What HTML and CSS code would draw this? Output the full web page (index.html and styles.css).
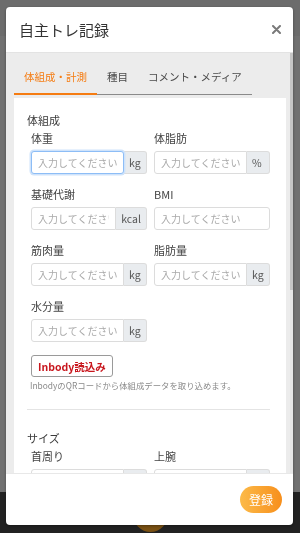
FILE: index.html
```html
<!DOCTYPE html>
<html lang="ja">
<head>
    <meta charset="UTF-8">
    <meta name="viewport" content="width=device-width, initial-scale=1.0">
    <title>自主トレ記録</title>
    <link rel="stylesheet" href="styles.css">
</head>
<body>
    <!-- page behind the dialog -->
    <div class="page">
        <div class="page-header"></div>
        <div class="page-main"></div>
        <div class="bottom-nav"><span class="nav-center"></span></div>
    </div>
    <div class="overlay"></div>

    <div class="modal">
        <div class="modal-header">
            <h1 class="modal-title">自主トレ記録</h1>
            <button class="close" type="button">
                <svg width="9" height="9" viewBox="0 0 9 9"><path d="M1 1L8 8M8 1L1 8" stroke="#7a7a7a" stroke-width="2" stroke-linecap="round"/></svg>
            </button>
        </div>

        <div class="modal-body">
            <div class="scroll-area">
                <div class="tabs">
                    <span class="tab active">体組成・計測</span>
                    <span class="tab">種目</span>
                    <span class="tab">コメント・メディア</span>
                </div>

                <div class="card">
                    <div class="section-title">体組成</div>
                    <div class="fields">
                        <div class="field">
                            <label>体重</label>
                            <div class="input-group"><input type="text" class="focus" placeholder="入力してください"><span class="addon">kg</span></div>
                        </div>
                        <div class="field">
                            <label>体脂肪</label>
                            <div class="input-group"><input type="text" placeholder="入力してください"><span class="addon">%</span></div>
                        </div>
                        <div class="field">
                            <label>基礎代謝</label>
                            <div class="input-group"><input type="text" placeholder="入力してください"><span class="addon">kcal</span></div>
                        </div>
                        <div class="field">
                            <label>BMI</label>
                            <div class="input-group"><input type="text" class="solo" placeholder="入力してください"></div>
                        </div>
                        <div class="field">
                            <label>筋肉量</label>
                            <div class="input-group"><input type="text" placeholder="入力してください"><span class="addon">kg</span></div>
                        </div>
                        <div class="field">
                            <label>脂肪量</label>
                            <div class="input-group"><input type="text" placeholder="入力してください"><span class="addon">kg</span></div>
                        </div>
                        <div class="field">
                            <label>水分量</label>
                            <div class="input-group"><input type="text" placeholder="入力してください"><span class="addon">kg</span></div>
                        </div>
                    </div>

                    <button class="inbody-btn" type="button">Inbody読込み</button>
                    <p class="help">InbodyのQRコードから体組成データを取り込めます。</p>

                    <hr class="divider">

                    <div class="section-title">サイズ</div>
                    <div class="fields">
                        <div class="field"><label>首周り</label><div class="input-group"><input type="text"><span class="addon"></span></div></div>
                        <div class="field"><label>上腕</label><div class="input-group"><input type="text"><span class="addon"></span></div></div>
                    </div>
                </div>
            </div>
            <div class="scrollbar"><div class="thumb"></div></div>
        </div>

        <div class="modal-footer">
            <button class="submit" type="button">登録</button>
        </div>
    </div>
</body>
</html>
```

FILE: styles.css
```css
html, body {
    margin: 0;
    height: 100%;
}

body {
    font-family: "Noto Sans CJK JP", "Noto Sans", sans-serif;
    color: #333;
    overflow: hidden;
}

/* page behind the dialog */
.page {
    height: 100%;
    display: flex;
    flex-direction: column;
    background: #e2e2e2;
}

.page-header {
    height: 36px;
    background: #d8d8d8;
}

.page-main {
    flex: 1;
}

.bottom-nav {
    height: 41px;
    background: #444;
    display: flex;
    justify-content: center;
}

.nav-center {
    width: 35px;
    height: 35px;
    margin-top: 5px;
    border-radius: 50%;
    background: #f3a126;
}

.overlay {
    position: fixed;
    inset: 0;
    background: rgba(0, 0, 0, 0.5);
}

/* dialog */
.modal {
    position: fixed;
    left: 6px;
    top: 7px;
    width: 287px;
    height: 518px;
    background: #fff;
    border-radius: 4px;
    box-shadow: 0 1px 3px rgba(0, 0, 0, 0.35);
    display: flex;
    flex-direction: column;
    overflow: hidden;
}

.modal-header {
    height: 45px;
    border-bottom: 1px solid #e3e3e3;
    display: flex;
    align-items: center;
    justify-content: space-between;
    padding: 0 11px 0 13px;
    flex-shrink: 0;
}

.modal-title {
    margin: 0;
    font-size: 15px;
    font-weight: 400;
    color: #333;
}

.close {
    border: none;
    background: none;
    padding: 0;
    width: 11px;
    height: 11px;
    display: flex;
    align-items: center;
    justify-content: center;
}

.modal-body {
    flex: 1;
    min-height: 0;
    display: flex;
    background: #ececec;
}

.scroll-area {
    flex: 1;
    min-width: 0;
    overflow: hidden;
    padding: 6px 4px 0 8px;
}

.scrollbar {
    width: 3px;
    background: #e6e6e6;
}

.thumb {
    height: 237px;
    background: #c6c6c6;
}

/* tabs */
.tabs {
    display: flex;
    width: fit-content;
    border-bottom: 1px solid #8a8a8a;
}

.tab {
    font-size: 10.5px;
    line-height: 14px;
    padding: 11px 10px 9px;
    margin-bottom: -1px;
    border-bottom: 2px solid transparent;
    color: #4a4a4a;
}

.tab.active {
    color: #f57c12;
    border-bottom-color: #f57c12;
}

.card {
    background: #fff;
    margin-top: 3px;
    padding: 15px 16px 16px 13px;
}

.section-title {
    font-size: 11px;
    line-height: 14px;
    margin-bottom: 4px;
    color: #3a3a3a;
}

.fields {
    display: grid;
    grid-template-columns: minmax(0, 1fr) minmax(0, 1fr);
    column-gap: 7px;
    row-gap: 13px;
    padding-left: 4px;
}

.field {
    min-width: 0;
}

.field label {
    display: block;
    font-size: 11px;
    line-height: 14px;
    margin-bottom: 6px;
    color: #444;
}

.input-group {
    display: flex;
    height: 23px;
}

.input-group input {
    flex: 1;
    width: 0;
    min-width: 0;
    box-sizing: border-box;
    height: 23px;
    border: 1px solid #dcdcdc;
    border-radius: 3px 0 0 3px;
    padding: 0 6px;
    font-family: inherit;
    font-size: 10px;
    color: #333;
    outline: none;
    background: #fff;
}

.input-group input::placeholder {
    color: #a9a9a9;
}

.input-group input.solo {
    border-radius: 3px;
}

.input-group input.focus {
    border-color: #8dbdf6;
    border-radius: 3px;
    box-shadow: 0 0 0 1.5px #cfe3fb;
    position: relative;
}

.addon {
    display: flex;
    align-items: center;
    box-sizing: border-box;
    min-width: 23px;
    padding: 0 5px;
    background: #e9ecef;
    border: 1px solid #dcdcdc;
    border-left: none;
    border-radius: 0 3px 3px 0;
    font-size: 10.5px;
    color: #555;
}

.inbody-btn {
    margin: 13px 0 0 4px;
    height: 22px;
    padding: 0 6px;
    background: #fff;
    border: 1px solid #9a9a9a;
    border-radius: 3px;
    font-family: inherit;
    font-size: 10.5px;
    font-weight: 700;
    color: #c8161d;
}

.help {
    margin: 2px 0 0 3px;
    font-size: 8.4px;
    line-height: 12px;
    color: #8a8a8a;
}

.divider {
    border: none;
    border-top: 1px solid #e4e4e4;
    margin: 18px 0 21px;
}

/* footer */
.modal-footer {
    height: 51px;
    border-top: 1px solid #e8e8e8;
    display: flex;
    align-items: center;
    justify-content: flex-end;
    padding-right: 11px;
    flex-shrink: 0;
}

.submit {
    width: 42px;
    height: 27px;
    border: none;
    border-radius: 14px;
    background: linear-gradient(to right, #fcba48, #f78f1c);
    color: #fff;
    font-family: inherit;
    font-size: 12px;
    padding: 0;
}
```
